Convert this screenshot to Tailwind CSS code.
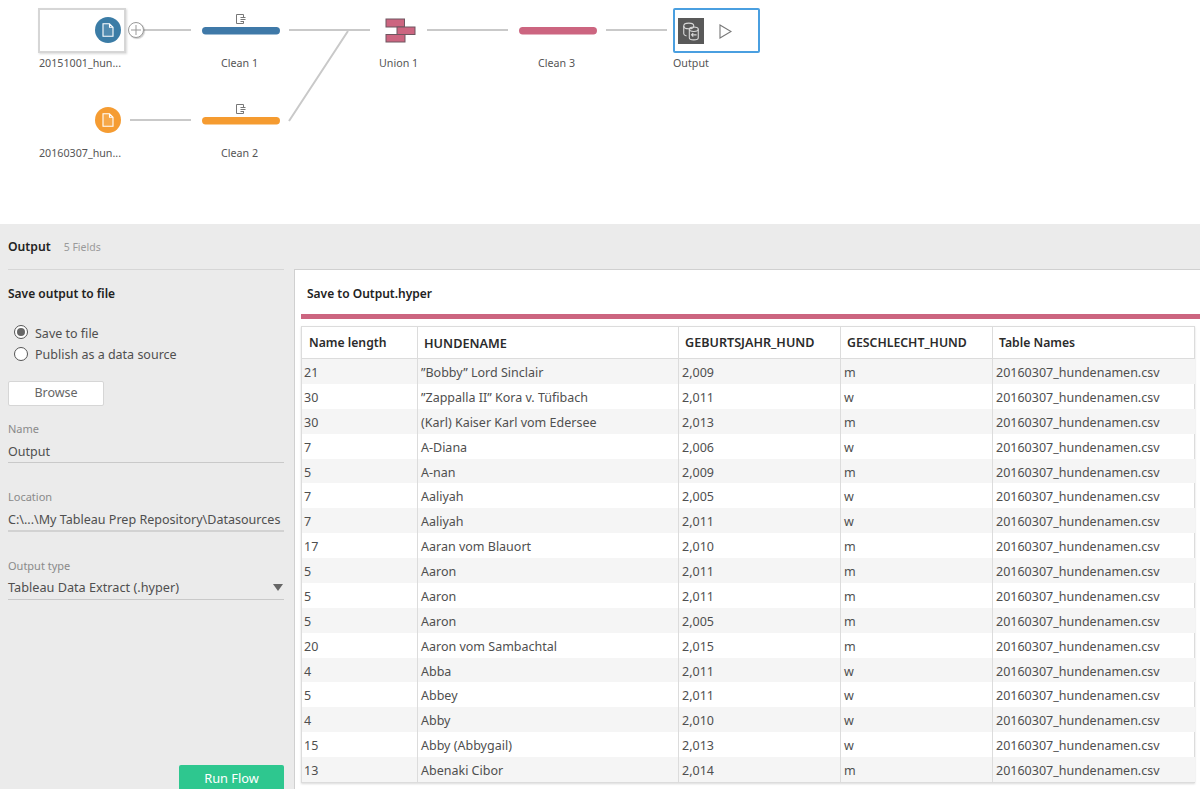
<!DOCTYPE html>
<html><head><meta charset="utf-8"><script src="https://cdn.jsdelivr.net/npm/@tailwindcss/browser@4"></script></head>
<body class="m-0 overflow-hidden bg-white">
<div class="w-[1200px] h-[789px] flex flex-col overflow-hidden font-['Noto_Sans',sans-serif] text-[12.5px] text-[#4f4f4f]">
  <!-- flow canvas -->
  <div class="relative h-[224px] shrink-0 bg-white text-[10.7px] text-[#555]">
    <svg class="absolute inset-0" width="1200" height="224" fill="none">
      <g stroke="#c9c9c9" stroke-width="2">
        <path d="M144 30H191M130 120H191M289 30H370M289 121L348 31M427 30H508M606 30H667"/>
      </g>
      <rect x="202" y="27" width="78" height="7.500" rx="3.700" fill="#3f79a8"/>
      <rect x="202" y="117" width="78" height="7.500" rx="3.700" fill="#f59b30"/>
      <rect x="519" y="27" width="78" height="7.500" rx="3.700" fill="#cc6580"/>
      <!-- clean step icons -->
      <g stroke="#777" stroke-width="1" fill="none">
        <path d="M243.500 14.500H236.500V23.500H243.500M240.500 17.500H245.500M240.500 19.500H245.500M240.500 21.500H244M243.500 14.500V17.500M243.500 21.500V23.500"/>
        <path d="M243.500 104.500H236.500V113.500H243.500M240.500 107.500H245.500M240.500 109.500H245.500M240.500 111.500H244M243.500 104.500V107.500M243.500 111.500V113.500"/>
      </g>
      <!-- union icon -->
      <g fill="#cc6580" stroke="#6f5660" stroke-width="1">
        <rect x="386" y="19" width="18.500" height="8"/>
        <rect x="397" y="27" width="18" height="7.500"/>
        <rect x="386" y="34.500" width="19" height="7.500"/>
      </g>
    </svg>
    <!-- input node 1 -->
    <div class="absolute left-[38px] top-[8px] w-[88px] h-[45px] border-2 border-[#d6d6d6] bg-white shadow-[1px_1px_2px_rgba(0,0,0,0.15)]"></div>
    <div class="absolute left-[95px] top-[17px] w-[26px] h-[26px] rounded-full bg-[#3b7ca6] flex items-center justify-center">
      <svg width="12" height="14" viewBox="0 0 12 14" fill="none" stroke="#fff" stroke-width="1.100"><path d="M1 .8H7.500L11 4.300V13.200H1ZM7.500 .8V4.300H11" fill="#fff" fill-opacity=".12"/></svg>
    </div>
    <div class="absolute left-[128px] top-[22px] w-[16px] h-[16px] rounded-full border border-[#999] bg-white shadow-[1px_1px_1px_rgba(0,0,0,0.2)] flex items-center justify-center">
      <svg width="10" height="10" viewBox="0 0 10 10" stroke="#999" stroke-width="1"><path d="M5 0V10M0 5H10"/></svg>
    </div>
    <!-- input node 2 -->
    <div class="absolute left-[95px] top-[107px] w-[26px] h-[26px] rounded-full bg-[#f59c32] flex items-center justify-center">
      <svg width="12" height="14" viewBox="0 0 12 14" fill="none" stroke="#fff" stroke-width="1.100"><path d="M1 .8H7.500L11 4.300V13.200H1ZM7.500 .8V4.300H11" fill="#fff" fill-opacity=".12"/></svg>
    </div>
    <!-- output node -->
    <div class="absolute left-[673px] top-[8px] w-[87px] h-[45px] border-2 border-[#4a9fe0] rounded-[2px] bg-white"></div>
    <div class="absolute left-[678px] top-[18px] w-[26px] h-[26px] bg-[#595959] flex items-center justify-center">
      <svg width="18" height="19" viewBox="0 0 16 17" fill="none" stroke="#d8d8d8" stroke-width="1"><ellipse cx="6" cy="3.500" rx="4.500" ry="2.500"/><path d="M1.500 3.500V10.500C1.500 11.500 2.500 12 4 12.500"/><ellipse cx="10.500" cy="6.500" rx="4" ry="2"/><path d="M6.500 6.500V14C6.500 15.300 8.500 16 10.500 16S14.500 15.300 14.500 14V6.500M13 11.500H8.500M10 10L8.500 11.500L10 13"/></svg>
    </div>
    <svg class="absolute left-[719px] top-[24px]" width="13" height="15" viewBox="0 0 13 15" fill="none" stroke="#777" stroke-width="1.100"><path d="M1 1L12 7.500L1 14Z"/></svg>
    <!-- labels -->
    <span class="absolute left-[39px] top-[55px] leading-4">20151001_hun...</span>
    <span class="absolute left-[221px] top-[55px] leading-4">Clean 1</span>
    <span class="absolute left-[379px] top-[55px] leading-4">Union 1</span>
    <span class="absolute left-[538px] top-[55px] leading-4">Clean 3</span>
    <span class="absolute left-[673px] top-[55px] leading-4">Output</span>
    <span class="absolute left-[39px] top-[145px] leading-4">20160307_hun...</span>
    <span class="absolute left-[221px] top-[145px] leading-4">Clean 2</span>
  </div>

  <!-- lower area -->
  <div class="flex-1 min-h-0 bg-[#ebebeb] flex flex-col">
    <div class="h-[45px] shrink-0 flex items-center gap-[13px] pl-2 pt-[1px]">
      <span class="font-semibold text-[12.2px] text-[#222]">Output</span>
      <span class="text-[10.5px] text-[#9a9a9a] pt-[2px]">5 Fields</span>
    </div>
    <div class="flex-1 min-h-0 flex">
      <!-- side panel -->
      <div class="w-[294px] shrink-0 flex flex-col pl-2 pr-[10px] relative">
        <div class="border-t border-[#d6d6d6] pt-[15px] leading-[17px] font-semibold text-[12px] text-[#222]">Save output to file</div>
        <div class="mt-[22px] pl-[6px] flex flex-col gap-[6px]">
          <label class="flex items-center gap-[7px] h-[16px]"><span class="w-[14px] h-[14px] rounded-full border border-[#555] bg-white flex items-center justify-center"><span class="w-[8px] h-[8px] rounded-full bg-[#666]"></span></span><span class="pt-[4px]">Save to file</span></label>
          <label class="flex items-center gap-[7px] h-[16px]"><span class="w-[14px] h-[14px] rounded-full border border-[#555] bg-white"></span><span class="pt-[3px]">Publish as a data source</span></label>
        </div>
        <div class="mt-[19px] w-[96px] h-[25px] rounded-[2px] border border-[#d6d6d6] bg-white flex items-center justify-center text-[#666]">Browse</div>
        <div class="mt-[15px] text-[11px] leading-4 text-[#8a8a8a]">Name</div>
        <div class="mt-[5px] h-[20px] leading-[20px] border-b border-[#c9c9c9] box-content">Output</div>
        <div class="mt-[26px] text-[11px] leading-4 text-[#8a8a8a]">Location</div>
        <div class="mt-[5px] h-[20px] leading-[20px] whitespace-nowrap border-b-2 border-[#d2d2d2] box-content text-[12.55px]">C:\...\My Tableau Prep Repository\Datasources</div>
        <div class="mt-[26px] text-[11px] leading-4 text-[#8a8a8a]">Output type</div>
        <div class="mt-[3px] h-[22px] leading-[20px] border-b border-[#c9c9c9] box-content flex items-start justify-between text-[12.7px]">Tableau Data Extract (.hyper)<svg width="10" height="7" viewBox="0 0 10 7" class="mr-[1px] mt-[7px]"><path d="M0 0H10L5 7Z" fill="#666"/></svg></div>
        <div class="absolute left-[179px] top-[496px] w-[105px] h-[30px] rounded-[2px] bg-[#2ec78f] flex items-start pt-[4px] justify-center text-white text-[12.8px]">Run Flow</div>
      </div>
      <!-- preview -->
      <div class="flex-1 min-w-0 bg-white border-t border-l border-[#d0d0d0] flex flex-col pl-[6px] overflow-hidden">
        <div class="h-[44px] shrink-0 flex items-center font-semibold text-[12px] text-[#222] pl-[6px] pt-[4px]">Save to Output.hyper</div>
        <div class="h-[5px] shrink-0 bg-[#cc6580]"></div>
        <div class="mt-[7px] w-[894px] border border-[#dcdcdc] shadow-[0_1px_2px_rgba(0,0,0,0.15)]">
          <div class="grid grid-cols-[115px_261px_162px_152px_203px] h-[32px] items-stretch border-b border-[#dcdcdc] font-semibold text-[12.2px] text-[#2b2b2b] [&>div]:pt-[2px]">
            <div class="flex items-center pl-[7px]">Name length</div>
            <div class="flex items-center pl-[6px] border-l border-[#dcdcdc] text-[12.7px]">HUNDENAME</div>
            <div class="flex items-center pl-[6px] border-l border-[#dcdcdc] text-[12.6px]">GEBURTSJAHR_HUND</div>
            <div class="flex items-center pl-[6px] border-l border-[#dcdcdc] text-[12.3px]">GESCHLECHT_HUND</div>
            <div class="flex items-center pl-[6px] border-l border-[#dcdcdc]">Table Names</div>
          </div>
          <div class="grid grid-cols-[115px_261px_162px_152px_203px] auto-rows-[24.875px] items-stretch [&>div]:flex [&>div]:items-center [&>div]:pt-[4px] [&>div:nth-child(5n+1)]:pl-[2px] [&>div:nth-child(5n+2)]:pl-[3px] [&>div:nth-child(5n+3)]:pl-[3px] [&>div:nth-child(5n+4)]:pl-[3px] [&>div:nth-child(5n+5)]:pl-[3px] [&>div:not(:nth-child(5n+1))]:border-l [&>div]:border-[#dcdcdc] [&>div:nth-child(10n+1)]:bg-[#f5f5f5] [&>div:nth-child(10n+2)]:bg-[#f5f5f5] [&>div:nth-child(10n+3)]:bg-[#f5f5f5] [&>div:nth-child(10n+4)]:bg-[#f5f5f5] [&>div:nth-child(10n+5)]:bg-[#f5f5f5]">
            <div>21</div><div>”Bobby” Lord Sinclair</div><div>2,009</div><div>m</div><div>20160307_hundenamen.csv</div>
            <div>30</div><div>”Zappalla II” Kora v. Tüfibach</div><div>2,011</div><div>w</div><div>20160307_hundenamen.csv</div>
            <div>30</div><div>(Karl) Kaiser Karl vom Edersee</div><div>2,013</div><div>m</div><div>20160307_hundenamen.csv</div>
            <div>7</div><div>A-Diana</div><div>2,006</div><div>w</div><div>20160307_hundenamen.csv</div>
            <div>5</div><div>A-nan</div><div>2,009</div><div>m</div><div>20160307_hundenamen.csv</div>
            <div>7</div><div>Aaliyah</div><div>2,005</div><div>w</div><div>20160307_hundenamen.csv</div>
            <div>7</div><div>Aaliyah</div><div>2,011</div><div>w</div><div>20160307_hundenamen.csv</div>
            <div>17</div><div>Aaran vom Blauort</div><div>2,010</div><div>m</div><div>20160307_hundenamen.csv</div>
            <div>5</div><div>Aaron</div><div>2,011</div><div>m</div><div>20160307_hundenamen.csv</div>
            <div>5</div><div>Aaron</div><div>2,011</div><div>m</div><div>20160307_hundenamen.csv</div>
            <div>5</div><div>Aaron</div><div>2,005</div><div>m</div><div>20160307_hundenamen.csv</div>
            <div>20</div><div>Aaron vom Sambachtal</div><div>2,015</div><div>m</div><div>20160307_hundenamen.csv</div>
            <div>4</div><div>Abba</div><div>2,011</div><div>w</div><div>20160307_hundenamen.csv</div>
            <div>5</div><div>Abbey</div><div>2,011</div><div>w</div><div>20160307_hundenamen.csv</div>
            <div>4</div><div>Abby</div><div>2,010</div><div>w</div><div>20160307_hundenamen.csv</div>
            <div>15</div><div>Abby (Abbygail)</div><div>2,013</div><div>w</div><div>20160307_hundenamen.csv</div>
            <div>13</div><div>Abenaki Cibor</div><div>2,014</div><div>m</div><div>20160307_hundenamen.csv</div>
          </div>
        </div>
      </div>
    </div>
  </div>
</div>
</body></html>
